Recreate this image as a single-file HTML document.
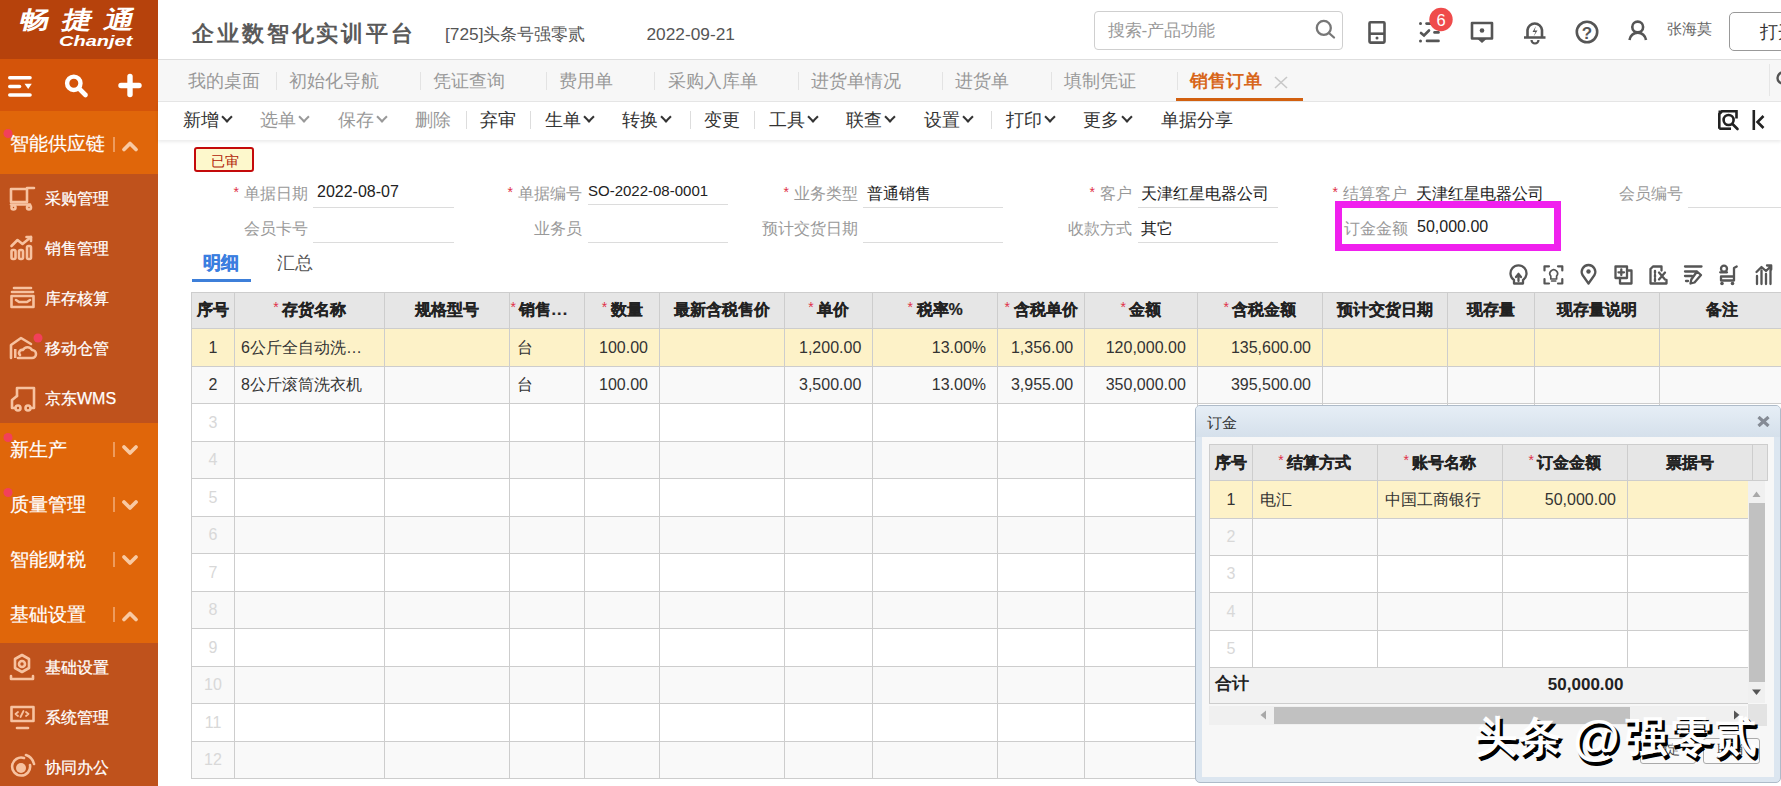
<!DOCTYPE html>
<html><head><meta charset="utf-8">
<style>
*{box-sizing:border-box;margin:0;padding:0}
html,body{width:1781px;height:786px;overflow:hidden;background:#fff;font-family:"Liberation Sans",sans-serif;color:#333}
.a{position:absolute;white-space:nowrap}
#side{position:absolute;left:0;top:0;width:158px;height:786px;background:#bf521c}
#logo{position:absolute;left:0;top:0;width:158px;height:58.5px;background:#b6420c}
#quick{position:absolute;left:0;top:58.5px;width:158px;height:52px;background:#d4540a}
.grp{position:absolute;left:0;width:158px;background:#e0660a;color:#fff;font-size:19px;-webkit-text-stroke:0.2px #fff}
.grp .t{position:absolute;left:10px}
.sub{position:absolute;color:#fff;font-size:16px;white-space:nowrap;-webkit-text-stroke:0.25px #fff}
#hdr{position:absolute;left:158px;top:0;width:1623px;height:60px;background:#fff;border-bottom:1px solid #dedede}
#tabs{position:absolute;left:158px;top:60px;width:1623px;height:41.5px;background:#f7f7f7;border-bottom:1px solid #e6e6e6}
#tool{position:absolute;left:158px;top:101.5px;width:1623px;height:38.5px;background:#fff;box-shadow:0 2px 3px rgba(0,0,0,.08)}
.tab{position:absolute;top:70px;font-size:17.5px;color:#999;line-height:22px}
.tsep{position:absolute;top:72px;width:1px;height:18px;background:#e3e3e3}
.tb{position:absolute;top:108px;font-size:17.5px;color:#333;line-height:24px}
.tb.g{color:#999}
.tbs{position:absolute;top:111px;width:1px;height:18px;background:#ddd}
.chev{display:inline-block;width:8px;height:8px;border-right:2.2px solid currentColor;border-bottom:2.2px solid currentColor;transform:rotate(45deg);margin-left:4px;vertical-align:5px}
.lbl{position:absolute;font-size:16px;color:#999;line-height:20px;text-align:right}
.lbl i{color:#e0304a;font-style:normal;margin-right:5px;font-size:14px;position:relative;top:-2px}
.val{position:absolute;font-size:16px;color:#222;line-height:20px}
.ul{position:absolute;height:1px;background:#dcdcdc}
.th{position:absolute;top:299px;font-size:16px;font-weight:bold;color:#222;line-height:22px;text-align:center;white-space:nowrap;-webkit-text-stroke:0.2px #222}
.th i{color:#e0304a;font-style:normal;font-weight:normal;font-size:14px;position:relative;top:-3px;margin-right:3.5px;-webkit-text-stroke:0}
.td{position:absolute;font-size:16px;color:#333;line-height:20px;white-space:nowrap}
.wm{top:707px;font-size:42px;font-weight:bold;color:#fff;line-height:60px;text-shadow:3px 3px 0 #000,2px 3.5px 0 #000}
</style></head><body>
<div id="side">
  <div id="logo">
    <div class="a" style="left:20px;top:4px;font-size:24px;font-weight:bold;color:#fff;letter-spacing:10px;transform:skewX(-14deg) scaleX(1.25);transform-origin:0 50%;line-height:32px">畅捷通</div>
    <div class="a" style="left:59px;top:32px;font-size:14.5px;font-weight:bold;font-style:italic;color:#fff;line-height:18px;transform:scaleX(1.38);transform-origin:0 50%;letter-spacing:0px">Chanjet</div>
  </div>
  <div id="quick">
    <svg class="a" style="left:0;top:0" width="158" height="52" viewBox="0 58.5 158 52">
      <g stroke="#fff" stroke-width="3.6" stroke-linecap="round" fill="none">
        <line x1="9.8" y1="77.3" x2="30" y2="77.3"/>
        <line x1="9.8" y1="86" x2="19.5" y2="86"/>
        <line x1="9.8" y1="94.5" x2="30" y2="94.5"/>
        <circle cx="73.8" cy="82.8" r="6.7" stroke-width="4.4"/>
        <line x1="79.5" y1="88.5" x2="85.5" y2="94.5" stroke-width="4.6"/>
        <line x1="121" y1="85" x2="139" y2="85" stroke-width="5.4"/>
        <line x1="130" y1="76" x2="130" y2="94" stroke-width="5.4"/>
      </g>
      <path d="M24.5 83.2 L31.8 83.2 L28.2 88.6 Z" fill="#fff"/>
    </svg>
  </div>
  <div class="grp" style="top:110.5px;height:63px"><span class="t" style="top:21.5px;line-height:24px">智能供应链</span></div>
  <div class="grp" style="top:422.5px;height:55px"><span class="t" style="top:15.5px;line-height:24px">新生产</span></div>
  <div class="grp" style="top:477.5px;height:55px"><span class="t" style="top:15.5px;line-height:24px">质量管理</span></div>
  <div class="grp" style="top:532.5px;height:55px"><span class="t" style="top:15.5px;line-height:24px">智能财税</span></div>
  <div class="grp" style="top:587.5px;height:55px"><span class="t" style="top:15.5px;line-height:24px">基础设置</span></div>
  <svg class="a" style="left:0;top:0" width="158" height="786">
    <g fill="#f2405a">
      <circle cx="8" cy="133.5" r="4.5"/><circle cx="38" cy="338" r="4.5"/>
      <circle cx="8" cy="437.5" r="4.5"/><circle cx="8" cy="492.5" r="4.5"/>
    </g>
    <g stroke="#f6b98a" stroke-width="1.3">
      <line x1="114" y1="137" x2="114" y2="152"/>
      <line x1="114" y1="442" x2="114" y2="457"/>
      <line x1="114" y1="497" x2="114" y2="512"/>
      <line x1="114" y1="552" x2="114" y2="567"/>
      <line x1="114" y1="607" x2="114" y2="622"/>
    </g>
    <g stroke="#f9c9a2" stroke-width="3.8" fill="none" stroke-linecap="round" stroke-linejoin="round">
      <polyline points="124,149.5 130,143.5 136,149.5"/>
      <polyline points="124,447 130,453 136,447"/>
      <polyline points="124,502 130,508 136,502"/>
      <polyline points="124,557 130,563 136,557"/>
      <polyline points="124,619.5 130,613.5 136,619.5"/>
    </g>
    <g stroke="#f7c2a0" stroke-width="2.6" fill="none" stroke-linecap="round" stroke-linejoin="round">
      <!-- cart -->
      <path d="M11 189 H27 V202 H11 Z M27 202 V188 H34"/>
      <path d="M11 204.5 H30"/>
      <circle cx="13.5" cy="207.5" r="2"/><circle cx="29" cy="207.5" r="2"/>
      <!-- chart -->
      <rect x="11.5" y="250" width="4" height="9" rx="1.5"/>
      <rect x="19" y="250" width="4" height="9" rx="1.5"/>
      <rect x="27" y="246" width="4" height="13" rx="1.5"/>
      <polyline points="11.5,246 17.5,240 22.5,244 31,237"/>
      <polyline points="26.5,237 31,237 31,241"/>
      <!-- stock -->
      <line x1="14" y1="288" x2="31" y2="288"/>
      <line x1="12" y1="292" x2="33" y2="292"/>
      <rect x="11.5" y="296" width="22" height="11"/>
      <polyline points="16,300 19,302 27,302 30,300"/>
      <!-- warehouse -->
      <polyline points="11,358 11,345 21,338 31,344"/>
      <rect x="14" y="349" width="2.5" height="9" fill="#f7c2a0" stroke="none"/>
      <path d="M18 358 H32 A4 4 0 0 0 32 350 A5 5 0 0 0 23 350 A3 3 0 0 0 20 355"/>
      <!-- truck -->
      <path d="M17 396 V388 H34 V408 H31"/>
      <path d="M17 396 L12 400 V408 H15"/>
      <circle cx="18" cy="408" r="2.5"/><circle cx="28" cy="408" r="2.5"/>
      <!-- gear setting -->
      <circle cx="22" cy="664" r="3"/>
      <path d="M22 655 L29 659 L29 668 L22 672 L15 668 L15 659 Z"/>
      <path d="M11 676 V679 H33 V676"/>
      <!-- monitor -->
      <rect x="11.5" y="707" width="22" height="14"/>
      <line x1="17" y1="728" x2="28" y2="728"/>
      <polyline points="18,712 15.5,714 18,716" stroke-width="1.8"/>
      <polyline points="26,712 28.5,714 26,716" stroke-width="1.8"/>
      <line x1="23.5" y1="711" x2="20.5" y2="717" stroke-width="1.8"/>
      <!-- collab -->
      <path d="M30 765 A9 9 0 1 1 24 758"/>
      <path d="M26 755 A12 12 0 0 1 34 764"/>
    </g>
    <circle cx="21" cy="768" r="5" fill="#f7c2a0"/>
  </svg>
  <div class="sub" style="top:188.5px;left:45px;line-height:20px">采购管理</div>
  <div class="sub" style="top:238.5px;left:45px;line-height:20px">销售管理</div>
  <div class="sub" style="top:288.5px;left:45px;line-height:20px">库存核算</div>
  <div class="sub" style="top:338.5px;left:45px;line-height:20px">移动仓管</div>
  <div class="sub" style="top:388.5px;left:45px;line-height:20px">京东WMS</div>
  <div class="sub" style="top:658px;left:45px;line-height:20px">基础设置</div>
  <div class="sub" style="top:708px;left:45px;line-height:20px">系统管理</div>
  <div class="sub" style="top:758px;left:45px;line-height:20px">协同办公</div>
</div>
<div id="hdr"></div>
<div class="a" style="left:192px;top:20px;font-size:22px;font-weight:bold;color:#5a5a5a;line-height:28px;letter-spacing:2.9px">企业数智化实训平台</div>
<div class="a" style="left:445px;top:23px;font-size:17.3px;color:#555;line-height:22px">[725]头条号强零贰</div>
<div class="a" style="left:646.5px;top:23.2px;font-size:17.3px;color:#555;line-height:22px">2022-09-21</div>
<div class="a" style="left:1093.8px;top:11.3px;width:249.6px;height:39px;border:1px solid #cfcfcf;border-radius:4px;background:#fff"></div>
<div class="a" style="left:1108px;top:18.5px;font-size:17.3px;color:#999;line-height:22px;letter-spacing:-0.2px">搜索-产品功能</div>
<svg class="a" style="left:0;top:0" width="1781" height="59">
  <g stroke="#777" stroke-width="2.3" fill="none" stroke-linecap="round">
    <circle cx="1323.8" cy="27.9" r="7"/>
    <line x1="1329.5" y1="33.5" x2="1334" y2="37.5"/>
  </g>
  <g stroke="#555" stroke-width="2.6" fill="none" stroke-linejoin="round">
    <rect x="1369.5" y="22.3" width="15" height="20.3" rx="1"/>
    <line x1="1369.5" y1="33.7" x2="1384.5" y2="33.7"/>
    <rect x="1472" y="23" width="20" height="15.5"/>
    <path d="M1524 37.5 H1545.5 M1527.5 37.5 V30 A7.3 7.3 0 0 1 1542 30 V37.5"/>
    <circle cx="1587" cy="32" r="10.2"/>
    <circle cx="1637.7" cy="27" r="5.4"/>
    <path d="M1629.5 40 A8.3 8.3 0 0 1 1646 40"/>
  </g>
  <path d="M1477 38.5 L1482 43 L1487 38.5" fill="#555"/>
  <circle cx="1482" cy="30.5" r="2.3" fill="#555"/>
  <circle cx="1377" cy="38" r="1.5" fill="#555"/>
  <path d="M1531.5 40 A3.5 3.5 0 0 0 1538.5 40" stroke="#555" stroke-width="2.2" fill="none"/>
  <path d="M1536 26 L1532.5 32 L1535.5 32 L1533.5 36.5 L1537.5 30.5 L1534.5 30.5 Z" fill="#555"/>
  <g fill="#555"><circle cx="1420.5" cy="23.6" r="1.5"/><circle cx="1420.5" cy="40.9" r="1.5"/></g>
  <g stroke="#555" stroke-width="2.6" stroke-linecap="round" fill="none">
    <line x1="1426.5" y1="23.6" x2="1431" y2="23.6"/>
    <line x1="1434.5" y1="32.4" x2="1438.5" y2="32.4"/>
    <line x1="1427" y1="40.9" x2="1438.5" y2="40.9"/>
    <polyline points="1421,33 1424,35.5 1429,30.5"/>
  </g>
  <circle cx="1441" cy="19.5" r="11.7" fill="#ef4b4b"/>
  <text x="1441" y="25.5" font-size="16.5" fill="#fff" text-anchor="middle" font-family="Liberation Sans">6</text>
  <text x="1587" y="38.5" font-size="17" fill="#555" text-anchor="middle" font-family="Liberation Sans" font-weight="bold">?</text>
</svg>
<div class="a" style="left:1667px;top:18.5px;font-size:15px;color:#666;line-height:20px">张海莫</div>
<div class="a" style="left:1728.5px;top:11.5px;width:80px;height:39.5px;border:1px solid #999;border-radius:5px;background:#fff"></div>
<div class="a" style="left:1760px;top:21px;font-size:17.5px;color:#333;line-height:22px">打开</div>
<div id="tabs"></div>
<div class="tab" style="left:187.5px">我的桌面</div>
<div class="tsep" style="left:275.5px"></div>
<div class="tab" style="left:288.5px">初始化导航</div>
<div class="tsep" style="left:419.5px"></div>
<div class="tab" style="left:432.5px">凭证查询</div>
<div class="tsep" style="left:545.5px"></div>
<div class="tab" style="left:558.5px">费用单</div>
<div class="tsep" style="left:654px"></div>
<div class="tab" style="left:667.5px">采购入库单</div>
<div class="tsep" style="left:798px"></div>
<div class="tab" style="left:811px">进货单情况</div>
<div class="tsep" style="left:941.5px"></div>
<div class="tab" style="left:954.5px">进货单</div>
<div class="tsep" style="left:1050.5px"></div>
<div class="tab" style="left:1063.5px">填制凭证</div>
<div class="tsep" style="left:1176.5px"></div>
<div class="tab" style="left:1190px;color:#d8661a;font-weight:bold">销售订单</div>
<svg class="a" style="left:1274px;top:76px" width="14" height="13"><g stroke="#c8c8c8" stroke-width="1.6"><line x1="1" y1="1" x2="13" y2="12"/><line x1="13" y1="1" x2="1" y2="12"/></g></svg>
<div class="a" style="left:1176px;top:98px;width:127px;height:3px;background:#d2600f"></div>
<div class="a" style="left:1769px;top:64px;width:1px;height:32px;background:#e6e6e6"></div>
<svg class="a" style="left:1772px;top:70px" width="10" height="20"><circle cx="11" cy="8" r="5.5" stroke="#555" stroke-width="2.4" fill="none"/></svg>
<div id="tool"></div>
<div class="tb" style="left:182.5px">新增<span class="chev"></span></div>
<div class="tb g" style="left:260px">选单<span class="chev"></span></div>
<div class="tb g" style="left:338px">保存<span class="chev"></span></div>
<div class="tb g" style="left:415px">删除</div>
<div class="tbs" style="left:465.5px"></div>
<div class="tb" style="left:480px">弃审</div>
<div class="tbs" style="left:529.5px"></div>
<div class="tb" style="left:544.5px">生单<span class="chev"></span></div>
<div class="tb" style="left:622px">转换<span class="chev"></span></div>
<div class="tbs" style="left:689.5px"></div>
<div class="tb" style="left:704px">变更</div>
<div class="tbs" style="left:754px"></div>
<div class="tb" style="left:769px">工具<span class="chev"></span></div>
<div class="tb" style="left:846px">联查<span class="chev"></span></div>
<div class="tb" style="left:924px">设置<span class="chev"></span></div>
<div class="tbs" style="left:991px"></div>
<div class="tb" style="left:1006px">打印<span class="chev"></span></div>
<div class="tb" style="left:1083px">更多<span class="chev"></span></div>
<div class="tb" style="left:1161px">单据分享</div>
<svg class="a" style="left:1710px;top:105px" width="71" height="32" viewBox="1710 105 71 32">
  <g stroke="#222" stroke-width="2.6" fill="none">
    <path d="M1719.3 128.7 V114 L1722 111.3 H1736.5 V118.5"/>
    <path d="M1719.3 128.7 H1731"/>
    <circle cx="1728.6" cy="120" r="5"/>
    <line x1="1732.5" y1="124" x2="1737.5" y2="129" stroke-linecap="round"/>
    <line x1="1753.8" y1="110" x2="1753.8" y2="130"/>
    <polyline points="1763.5,116 1757.5,122 1763.5,128"/>
  </g>
  <path d="M1718.5 110.5 H1723.5 L1718.5 115.5 Z" fill="#222"/>
</svg>

<div class="a" style="left:194px;top:147px;width:60px;height:24.5px;border:2px solid #c40a0a;border-radius:3px;background:#fdf8cc"></div>
<div class="a" style="left:194.5px;top:149.5px;width:60px;text-align:center;font-size:14px;color:#b01806;line-height:22px">已审</div>
<div class="lbl" style="left:160px;top:183.5px;width:148px"><i>*</i>单据日期</div>
<div class="val" style="left:317px;top:182px">2022-08-07</div>
<div class="ul" style="left:313px;top:206.5px;width:141px"></div>
<div class="lbl" style="left:434px;top:183.5px;width:148px"><i>*</i>单据编号</div>
<div class="val" style="left:588px;top:181px;font-size:15px">SO-2022-08-0001</div>
<div class="ul" style="left:588px;top:203.5px;width:140px"></div>
<div class="lbl" style="left:710px;top:183.5px;width:148px"><i>*</i>业务类型</div>
<div class="val" style="left:867px;top:183.5px">普通销售</div>
<div class="ul" style="left:863px;top:207px;width:140px"></div>
<div class="lbl" style="left:984px;top:183.5px;width:148px"><i>*</i>客户</div>
<div class="val" style="left:1141px;top:183.5px">天津红星电器公司</div>
<div class="ul" style="left:1138px;top:207px;width:140px"></div>
<div class="lbl" style="left:1259px;top:183.5px;width:148px"><i>*</i>结算客户</div>
<div class="val" style="left:1416px;top:183.5px">天津红星电器公司</div>
<div class="lbl" style="left:1535px;top:183.5px;width:148px">会员编号</div>
<div class="ul" style="left:1688px;top:207px;width:93px"></div>
<div class="lbl" style="left:160px;top:218.5px;width:148px">会员卡号</div>
<div class="ul" style="left:313px;top:241.5px;width:141px"></div>
<div class="lbl" style="left:434px;top:218.5px;width:148px">业务员</div>
<div class="ul" style="left:588px;top:241.5px;width:140px"></div>
<div class="lbl" style="left:710px;top:218.5px;width:148px">预计交货日期</div>
<div class="ul" style="left:863px;top:242px;width:140px"></div>
<div class="lbl" style="left:984px;top:218.5px;width:148px">收款方式</div>
<div class="val" style="left:1141px;top:218.5px">其它</div>
<div class="ul" style="left:1138px;top:242px;width:140px"></div>
<div class="lbl" style="left:1260px;top:218.5px;width:148px">订金金额</div>
<div class="val" style="left:1417px;top:217px">50,000.00</div>
<div class="a" style="left:1335px;top:201px;width:225.6px;height:49.6px;border:7px solid #f020ee"></div>
<div class="a" style="left:203px;top:251.5px;font-size:17.5px;font-weight:bold;color:#3a7ee0;line-height:22px;-webkit-text-stroke:0.45px #3a7ee0">明细</div>
<div class="a" style="left:277px;top:251.5px;font-size:17.5px;color:#555;line-height:22px">汇总</div>
<div class="a" style="left:192px;top:278.5px;width:59px;height:3px;background:#3d7fd9"></div>

<div class="a" style="left:192px;top:292.0px;width:1589px;height:36.0px;background:#e6e6e6"></div>
<div class="a" style="left:192px;top:328.00px;width:1589px;height:37.50px;background:#fdf2c8"></div>
<div class="a" style="left:192px;top:365.50px;width:1589px;height:37.50px;background:#f9f9f9"></div>
<div class="a" style="left:192px;top:403.00px;width:1589px;height:37.50px;background:#fff"></div>
<div class="a" style="left:192px;top:440.50px;width:1589px;height:37.50px;background:#f9f9f9"></div>
<div class="a" style="left:192px;top:478.00px;width:1589px;height:37.50px;background:#fff"></div>
<div class="a" style="left:192px;top:515.50px;width:1589px;height:37.50px;background:#f9f9f9"></div>
<div class="a" style="left:192px;top:553.00px;width:1589px;height:37.50px;background:#fff"></div>
<div class="a" style="left:192px;top:590.50px;width:1589px;height:37.50px;background:#f9f9f9"></div>
<div class="a" style="left:192px;top:628.00px;width:1589px;height:37.50px;background:#fff"></div>
<div class="a" style="left:192px;top:665.50px;width:1589px;height:37.50px;background:#f9f9f9"></div>
<div class="a" style="left:192px;top:703.00px;width:1589px;height:37.50px;background:#fff"></div>
<div class="a" style="left:192px;top:740.50px;width:1589px;height:37.50px;background:#f9f9f9"></div>
<div class="a" style="left:191px;top:328.00px;width:1590px;height:1px;background:#cdcdcd"></div>
<div class="a" style="left:191px;top:365.50px;width:1590px;height:1px;background:#cdcdcd"></div>
<div class="a" style="left:191px;top:403.00px;width:1590px;height:1px;background:#cdcdcd"></div>
<div class="a" style="left:191px;top:440.50px;width:1590px;height:1px;background:#cdcdcd"></div>
<div class="a" style="left:191px;top:478.00px;width:1590px;height:1px;background:#cdcdcd"></div>
<div class="a" style="left:191px;top:515.50px;width:1590px;height:1px;background:#cdcdcd"></div>
<div class="a" style="left:191px;top:553.00px;width:1590px;height:1px;background:#cdcdcd"></div>
<div class="a" style="left:191px;top:590.50px;width:1590px;height:1px;background:#cdcdcd"></div>
<div class="a" style="left:191px;top:628.00px;width:1590px;height:1px;background:#cdcdcd"></div>
<div class="a" style="left:191px;top:665.50px;width:1590px;height:1px;background:#cdcdcd"></div>
<div class="a" style="left:191px;top:703.00px;width:1590px;height:1px;background:#cdcdcd"></div>
<div class="a" style="left:191px;top:740.50px;width:1590px;height:1px;background:#cdcdcd"></div>
<div class="a" style="left:191px;top:778.00px;width:1590px;height:1px;background:#cdcdcd"></div>
<div class="a" style="left:191px;top:291.5px;width:1590px;height:1px;background:#cdcdcd"></div>
<div class="a" style="left:191.0px;top:292.0px;width:1px;height:487.00px;background:#cdcdcd"></div>
<div class="a" style="left:234.0px;top:292.0px;width:1px;height:487.00px;background:#cdcdcd"></div>
<div class="a" style="left:384.3px;top:292.0px;width:1px;height:487.00px;background:#cdcdcd"></div>
<div class="a" style="left:509.0px;top:292.0px;width:1px;height:487.00px;background:#cdcdcd"></div>
<div class="a" style="left:584.3px;top:292.0px;width:1px;height:487.00px;background:#cdcdcd"></div>
<div class="a" style="left:659.0px;top:292.0px;width:1px;height:487.00px;background:#cdcdcd"></div>
<div class="a" style="left:784.3px;top:292.0px;width:1px;height:487.00px;background:#cdcdcd"></div>
<div class="a" style="left:872.3px;top:292.0px;width:1px;height:487.00px;background:#cdcdcd"></div>
<div class="a" style="left:997.0px;top:292.0px;width:1px;height:487.00px;background:#cdcdcd"></div>
<div class="a" style="left:1084.2px;top:292.0px;width:1px;height:487.00px;background:#cdcdcd"></div>
<div class="a" style="left:1196.8px;top:292.0px;width:1px;height:487.00px;background:#cdcdcd"></div>
<div class="a" style="left:1322.0px;top:292.0px;width:1px;height:487.00px;background:#cdcdcd"></div>
<div class="a" style="left:1446.8px;top:292.0px;width:1px;height:487.00px;background:#cdcdcd"></div>
<div class="a" style="left:1534.0px;top:292.0px;width:1px;height:487.00px;background:#cdcdcd"></div>
<div class="a" style="left:1658.8px;top:292.0px;width:1px;height:487.00px;background:#cdcdcd"></div>
<div class="th" style="left:191.5px;width:43.0px;">序号</div>
<div class="th" style="left:234.5px;width:150.3px;"><i>*</i>存货名称</div>
<div class="th" style="left:384.8px;width:124.7px;">规格型号</div>
<div class="th" style="left:509.5px;width:75.3px;text-align:left;padding-left:1px"><i>*</i>销售<span style="letter-spacing:1.2px">...</span></div>
<div class="th" style="left:584.8px;width:74.7px;"><i>*</i>数量</div>
<div class="th" style="left:659.5px;width:125.3px;">最新含税售价</div>
<div class="th" style="left:784.8px;width:88.0px;"><i>*</i>单价</div>
<div class="th" style="left:872.8px;width:124.7px;"><i>*</i>税率%</div>
<div class="th" style="left:997.5px;width:87.2px;"><i>*</i>含税单价</div>
<div class="th" style="left:1084.7px;width:112.6px;"><i>*</i>金额</div>
<div class="th" style="left:1197.3px;width:125.2px;"><i>*</i>含税金额</div>
<div class="th" style="left:1322.5px;width:124.8px;">预计交货日期</div>
<div class="th" style="left:1447.3px;width:87.2px;">现存量</div>
<div class="th" style="left:1534.5px;width:124.8px;">现存量说明</div>
<div class="th" style="left:1659.3px;width:124.7px;">备注</div>
<div class="td" style="left:191.5px;top:337.70px;width:43px;text-align:center;color:#333">1</div>
<div class="td" style="left:191.5px;top:375.20px;width:43px;text-align:center;color:#333">2</div>
<div class="td" style="left:191.5px;top:412.70px;width:43px;text-align:center;color:#d8d8d8">3</div>
<div class="td" style="left:191.5px;top:450.20px;width:43px;text-align:center;color:#d8d8d8">4</div>
<div class="td" style="left:191.5px;top:487.70px;width:43px;text-align:center;color:#d8d8d8">5</div>
<div class="td" style="left:191.5px;top:525.20px;width:43px;text-align:center;color:#d8d8d8">6</div>
<div class="td" style="left:191.5px;top:562.70px;width:43px;text-align:center;color:#d8d8d8">7</div>
<div class="td" style="left:191.5px;top:600.20px;width:43px;text-align:center;color:#d8d8d8">8</div>
<div class="td" style="left:191.5px;top:637.70px;width:43px;text-align:center;color:#d8d8d8">9</div>
<div class="td" style="left:191.5px;top:675.20px;width:43px;text-align:center;color:#d8d8d8">10</div>
<div class="td" style="left:191.5px;top:712.70px;width:43px;text-align:center;color:#d8d8d8">11</div>
<div class="td" style="left:191.5px;top:750.20px;width:43px;text-align:center;color:#d8d8d8">12</div>
<div class="td" style="left:241px;top:337.70px">6公斤全自动洗…</div>
<div class="td" style="left:517px;top:337.70px">台</div>
<div class="td" style="left:459.5px;top:337.70px;width:188.5px;text-align:right">100.00</div>
<div class="td" style="left:672.8px;top:337.70px;width:188.5px;text-align:right">1,200.00</div>
<div class="td" style="left:797.5px;top:337.70px;width:188.5px;text-align:right">13.00%</div>
<div class="td" style="left:884.7px;top:337.70px;width:188.5px;text-align:right">1,356.00</div>
<div class="td" style="left:997.3px;top:337.70px;width:188.5px;text-align:right">120,000.00</div>
<div class="td" style="left:1122.5px;top:337.70px;width:188.5px;text-align:right">135,600.00</div>
<div class="td" style="left:241px;top:375.20px">8公斤滚筒洗衣机</div>
<div class="td" style="left:517px;top:375.20px">台</div>
<div class="td" style="left:459.5px;top:375.20px;width:188.5px;text-align:right">100.00</div>
<div class="td" style="left:672.8px;top:375.20px;width:188.5px;text-align:right">3,500.00</div>
<div class="td" style="left:797.5px;top:375.20px;width:188.5px;text-align:right">13.00%</div>
<div class="td" style="left:884.7px;top:375.20px;width:188.5px;text-align:right">3,955.00</div>
<div class="td" style="left:997.3px;top:375.20px;width:188.5px;text-align:right">350,000.00</div>
<div class="td" style="left:1122.5px;top:375.20px;width:188.5px;text-align:right">395,500.00</div>
<svg class="a" style="left:1500px;top:258px" width="281" height="34" viewBox="1500 258 281 34">
 <g stroke="#555" stroke-width="2.3" fill="none" stroke-linejoin="round" stroke-linecap="round">
  <path d="M1514 280 A8 8 0 1 1 1523 280 V283.5 H1514 Z"/>
  <path d="M1516 277 L1518.5 274 L1521 277 M1518.5 274 V281"/>
  <path d="M1544.5 270.5 V266.3 H1549 M1558 266.3 H1562.3 V270.5 M1562.3 279 V283.5 H1558 M1549 283.5 H1544.5 V279" stroke-width="2.2"/>
  <path d="M1550.8 276 A3.8 3.8 0 1 1 1556.6 276 V279 H1550.8 Z" stroke-width="1.7"/>
  <line x1="1551.5" y1="281" x2="1555.9" y2="281" stroke-width="1.5"/>
  <path d="M1588.5 283.5 L1582.5 275 A6.8 6.8 0 1 1 1594.5 275 Z"/>
  <path d="M1615.5 266.5 H1627 V278 H1615.5 Z"/>
  <path d="M1627 270.5 H1631.5 V283.5 H1620 V278"/>
  <path d="M1618.5 272.3 H1624 M1621.3 269.5 V275"/>
  <path d="M1650.5 269 L1653 266.5 H1661.5 V270.5 M1650.5 269 V283.5 H1666.5 V280"/>
  <path d="M1659 272.5 L1665 279.5 M1665 272.5 L1659 279.5"/>
  <line x1="1655" y1="271" x2="1655" y2="281" stroke-dasharray="2 2"/>
  <path d="M1685 266.5 H1701.5 M1685 271.5 H1696 M1685 276 H1692 M1686 281 H1688"/>
  <path d="M1697 271.5 L1701 275 L1694.5 282.5 L1690.5 283.5 L1691.3 279.5 Z"/>
  <circle cx="1724" cy="268.7" r="3"/>
  <path d="M1721 276.5 H1734 V268 L1736.7 266.5 M1721 276.5 V280.5 H1734 V276"/>
  <path d="M1720.2 272.3 H1727"/>
  <path d="M1757 284 V276 M1761.5 284 V270.5 M1766 284 V274 M1770.5 284 V268.5"/>
  <path d="M1756.5 272 L1761.5 267 L1766 271 L1770.5 266.5 M1767 265.5 H1771.2 V269.5"/>
 </g>
 <g fill="#555"><circle cx="1588.5" cy="271.5" r="2.2"/><circle cx="1722" cy="283.5" r="1.8"/><circle cx="1732.5" cy="283.5" r="1.8"/></g>
</svg>
<div class="a" style="left:1194.5px;top:405px;width:586px;height:377.5px;border:1px solid #aebbc9;border-radius:5px;background:#dce6f0"></div>
<div class="a" style="left:1195.5px;top:406px;width:584px;height:30.5px;border-radius:4px 4px 0 0;background:linear-gradient(#e6eef6,#d5e0eb)"></div>
<div class="a" style="left:1207px;top:413px;font-size:15px;color:#333;line-height:20px">订金</div>
<svg class="a" style="left:1757px;top:415.5px" width="13" height="11"><g stroke="#858b95" stroke-width="3.2"><line x1="1.5" y1="1" x2="11.5" y2="10"/><line x1="11.5" y1="1" x2="1.5" y2="10"/></g></svg>
<div class="a" style="left:1201.5px;top:437px;width:572.5px;height:339.5px;background:#f7f7f7"></div>

<div class="a" style="left:1209.4px;top:444px;width:557.6px;height:37.19999999999999px;background:#e6e6e6"></div>
<div class="a" style="left:1209.4px;top:481.20px;width:538.8px;height:37.35px;background:#fdf2c8"></div>
<div class="a" style="left:1209.4px;top:518.55px;width:538.8px;height:37.35px;background:#f9f9f9"></div>
<div class="a" style="left:1209.4px;top:555.90px;width:538.8px;height:37.35px;background:#fff"></div>
<div class="a" style="left:1209.4px;top:593.25px;width:538.8px;height:37.35px;background:#f9f9f9"></div>
<div class="a" style="left:1209.4px;top:630.60px;width:538.8px;height:37.35px;background:#fff"></div>
<div class="a" style="left:1209.4px;top:667.95px;width:538.8px;height:35.55px;background:#f2f2f2"></div>
<div class="a" style="left:1209.4px;top:480.20px;width:557.6px;height:1px;background:#cdcdcd"></div>
<div class="a" style="left:1209.4px;top:517.55px;width:538.8px;height:1px;background:#cdcdcd"></div>
<div class="a" style="left:1209.4px;top:554.90px;width:538.8px;height:1px;background:#cdcdcd"></div>
<div class="a" style="left:1209.4px;top:592.25px;width:538.8px;height:1px;background:#cdcdcd"></div>
<div class="a" style="left:1209.4px;top:629.60px;width:538.8px;height:1px;background:#cdcdcd"></div>
<div class="a" style="left:1209.4px;top:666.95px;width:538.8px;height:1px;background:#cdcdcd"></div>
<div class="a" style="left:1209.4px;top:443.5px;width:557.6px;height:1px;background:#cdcdcd"></div>
<div class="a" style="left:1209.4px;top:703px;width:538.8px;height:1px;background:#cdcdcd"></div>
<div class="a" style="left:1208.9px;top:444px;width:1px;height:259.50px;background:#cdcdcd"></div>
<div class="a" style="left:1251.8px;top:444px;width:1px;height:223.95px;background:#cdcdcd"></div>
<div class="a" style="left:1376.9px;top:444px;width:1px;height:223.95px;background:#cdcdcd"></div>
<div class="a" style="left:1501.9px;top:444px;width:1px;height:223.95px;background:#cdcdcd"></div>
<div class="a" style="left:1627.0px;top:444px;width:1px;height:223.95px;background:#cdcdcd"></div>
<div class="a" style="left:1751.8px;top:444px;width:1px;height:223.95px;background:#cdcdcd"></div>
<div class="a" style="left:1766.5px;top:444px;width:1px;height:37.20px;background:#cdcdcd"></div>
<div class="th" style="top:452px;left:1209.4px;width:42.9px">序号</div>
<div class="th" style="top:452px;left:1252.3px;width:125.1px"><i>*</i>结算方式</div>
<div class="th" style="top:452px;left:1377.4px;width:125.0px"><i>*</i>账号名称</div>
<div class="th" style="top:452px;left:1502.4px;width:125.1px"><i>*</i>订金金额</div>
<div class="th" style="top:452px;left:1627.5px;width:124.8px">票据号</div>
<div class="td" style="left:1209.4px;top:489.70px;width:42.9px;text-align:center;color:#333">1</div>
<div class="td" style="left:1209.4px;top:527.05px;width:42.9px;text-align:center;color:#d8d8d8">2</div>
<div class="td" style="left:1209.4px;top:564.40px;width:42.9px;text-align:center;color:#d8d8d8">3</div>
<div class="td" style="left:1209.4px;top:601.75px;width:42.9px;text-align:center;color:#d8d8d8">4</div>
<div class="td" style="left:1209.4px;top:639.10px;width:42.9px;text-align:center;color:#d8d8d8">5</div>
<div class="td" style="left:1259.5px;top:489.70px">电汇</div>
<div class="td" style="left:1385px;top:489.70px">中国工商银行</div>
<div class="td" style="left:1416px;top:489.70px;width:200px;text-align:right">50,000.00</div>
<div class="td" style="left:1214.5px;top:674px;font-weight:bold;color:#222;font-size:17px">合计</div>
<div class="td" style="left:1423.5px;top:674.5px;width:200px;text-align:right;font-weight:bold;color:#222;font-size:17px">50,000.00</div>
<div class="a" style="left:1748.2px;top:481.2px;width:17px;height:222px;background:#f0f0f0"></div>
<div class="a" style="left:1749px;top:502.8px;width:15.5px;height:179px;background:#c1c1c1"></div>
<svg class="a" style="left:1748px;top:486px" width="18" height="212"><path d="M4.5 11 L8.5 5.5 L12.5 11 Z" fill="#a8a8a8"/><path d="M4 203.5 L8.5 209 L13 203.5 Z" fill="#555"/></svg>
<div class="a" style="left:1209.4px;top:705.5px;width:538px;height:19.5px;background:#f0f0f0"></div>
<div class="a" style="left:1273.7px;top:706.5px;width:356.5px;height:17px;background:#c1c1c1"></div>
<div class="a" style="left:1748.2px;top:703.5px;width:19px;height:22px;background:#e3e3e3"></div>
<svg class="a" style="left:1258px;top:706px" width="490" height="18"><path d="M8 4.5 L2.5 9 L8 13.5 Z" fill="#a8a8a8"/><path d="M476 4.5 L481.5 9 L476 13.5 Z" fill="#555"/></svg>
<div class="a" style="left:1640px;top:737.5px;width:56px;height:26px;border:1px solid #aaa;border-radius:3px;background:#fafafa"></div>
<div class="a" style="left:1703px;top:737.5px;width:57px;height:26px;border:1px solid #aaa;border-radius:3px;background:#fafafa"></div>
<div class="a" style="left:1654px;top:741px;font-size:13px;color:#444;line-height:18px">确定</div>
<div class="a" style="left:1717px;top:741px;font-size:13px;color:#444;line-height:18px">取消</div>
<div class="a wm" style="left:1474.5px">头</div>
<div class="a wm" style="left:1518.5px">条</div>
<div class="a wm" style="left:1573px"><span style="font-size:48px;position:relative;top:2px">@</span></div>
<div class="a wm" style="left:1625px">强</div>
<div class="a wm" style="left:1670.5px">零</div>
<div class="a wm" style="left:1715px">贰</div>
</body></html>
